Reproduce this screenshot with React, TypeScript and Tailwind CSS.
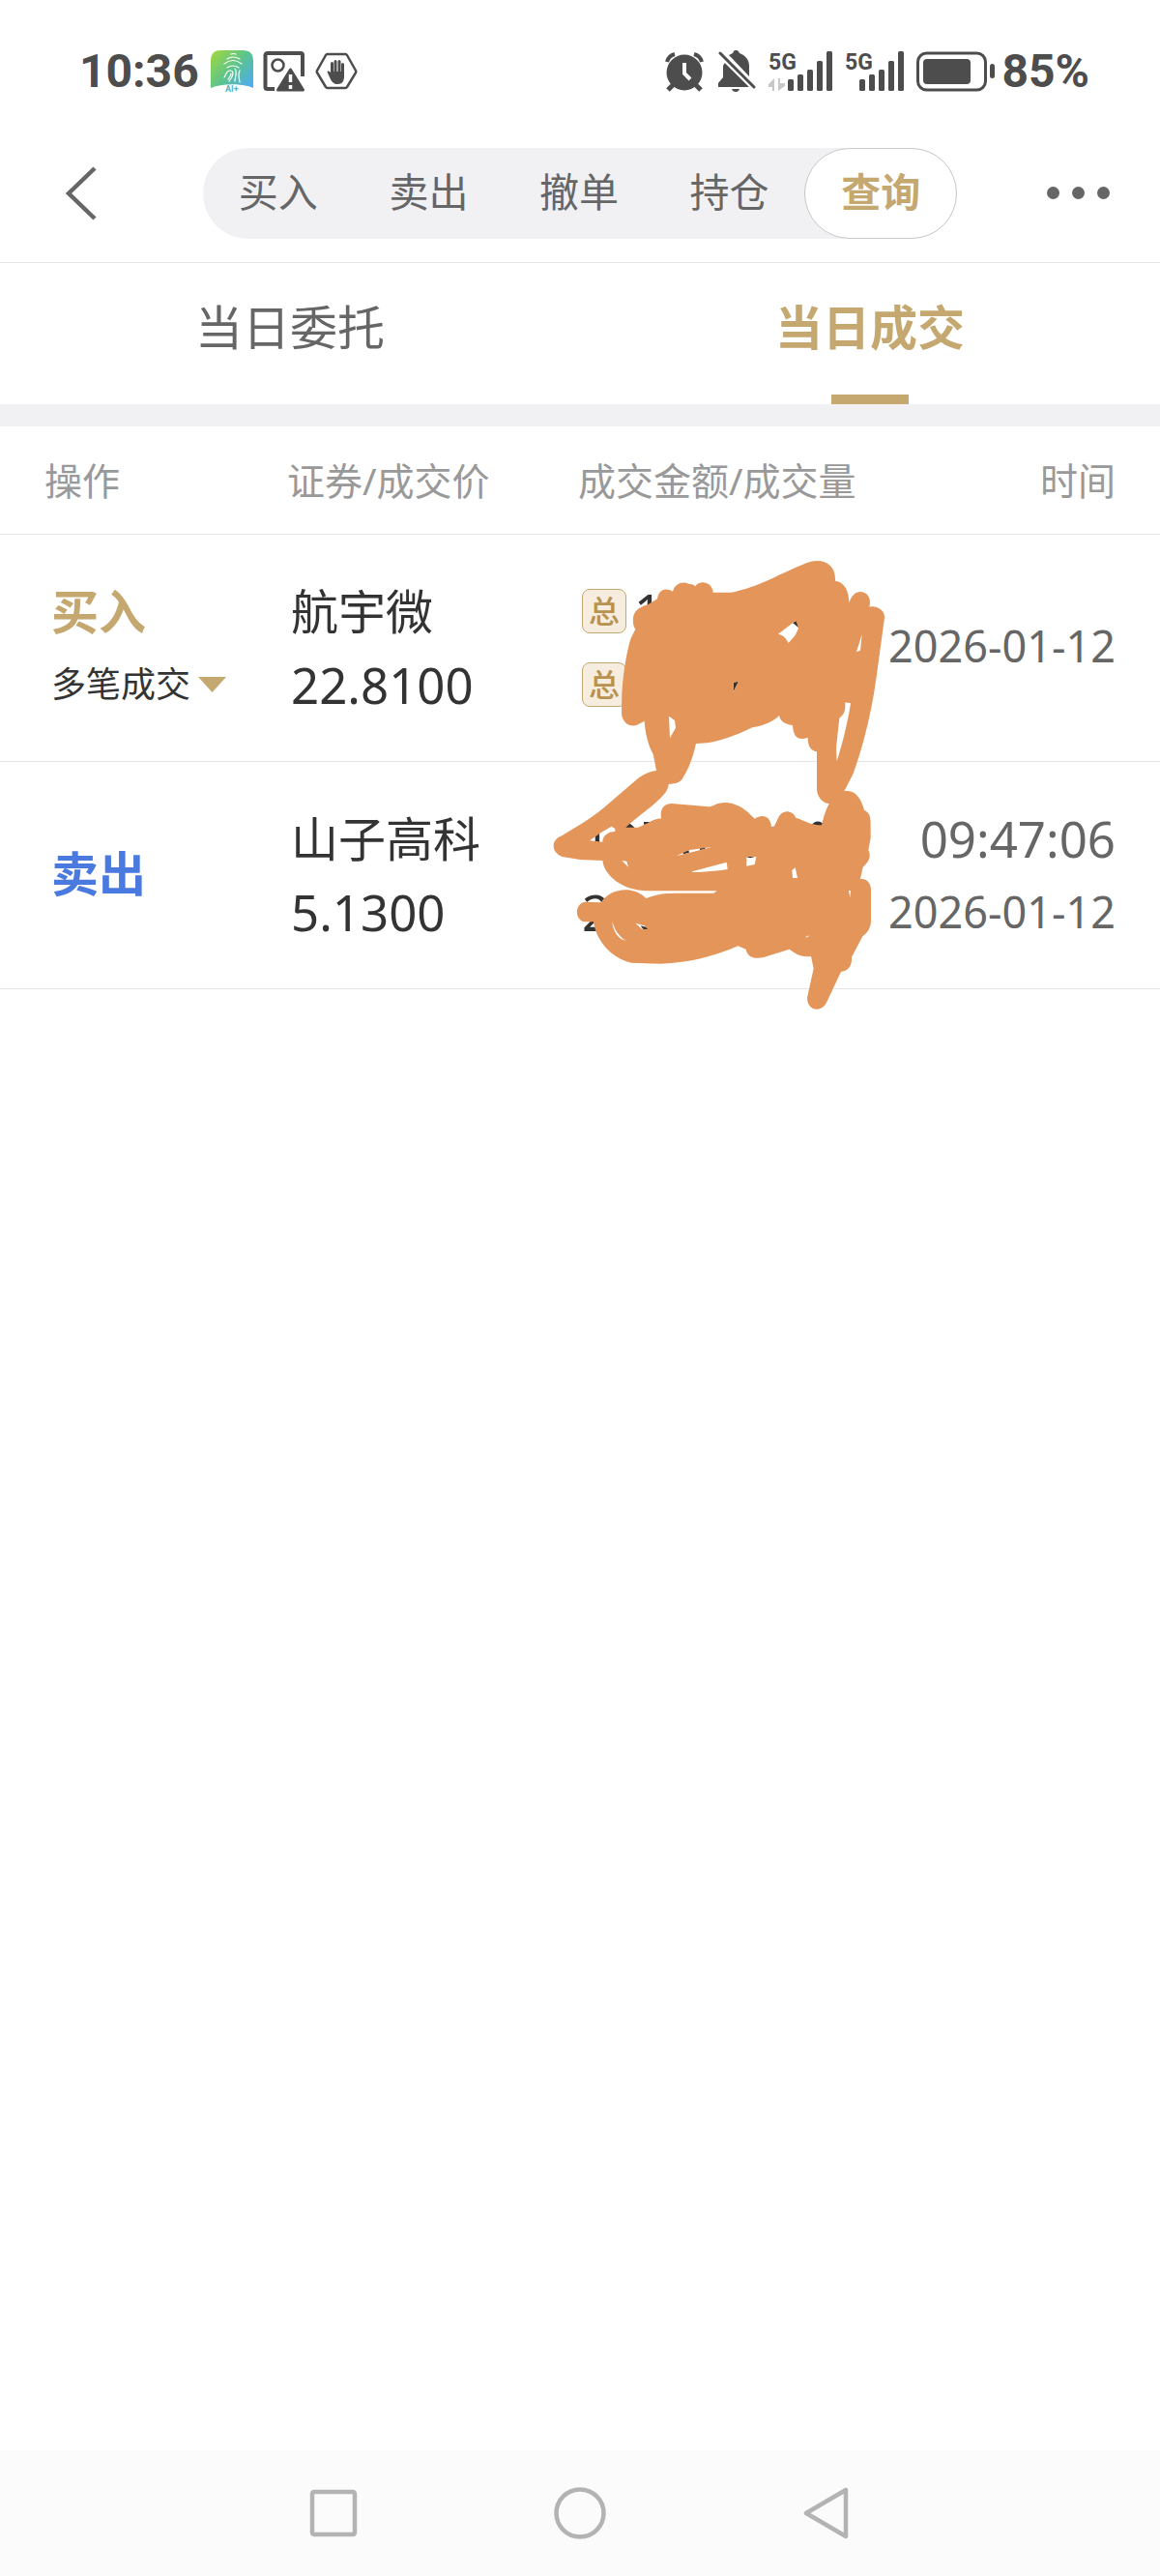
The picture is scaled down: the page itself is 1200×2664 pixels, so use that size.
import React, { useState } from 'react';

interface Trade {
  id: string;
  side: 'buy' | 'sell';
  name: string;
  price: string;
  amount: string;
  volume: string;
  time?: string;
  date: string;
  multiple?: boolean;
}

const NAV_ITEMS = ['买入', '卖出', '撤单', '持仓', '查询'];
const TABS = ['当日委托', '当日成交'];

const TRADES: Trade[] = [
  { id: 't1', side: 'buy', name: '航宇微', price: '22.8100', amount: '1', volume: '', date: '2026-01-12', multiple: true },
  { id: 't2', side: 'sell', name: '山子高科', price: '5.1300', amount: '1', volume: '2', time: '09:47:06', date: '2026-01-12' },
];

const FingerprintIcon = () => (
  <svg width="44" height="44" viewBox="0 0 44 44" fill="none">
    <defs>
      <linearGradient id="fp" x1="0" y1="0" x2="44" y2="40" gradientUnits="userSpaceOnUse">
        <stop offset="0" stopColor="#a3d93a" />
        <stop offset="0.5" stopColor="#5cc48c" />
        <stop offset="1" stopColor="#4aa8ff" />
      </linearGradient>
    </defs>
    <path d="M0 11C0 3 4 0 11 0h22c7 0 11 3 11 11v28C32 34 12 34 0 39Z" fill="url(#fp)" />
    <g stroke="#fff" strokeWidth="1.2" strokeLinecap="round">
      <path d="M21 4q3-1 5 0M17 9q6-4 13 0M14 14q9-7 18 0M17 18q6-4 12 0" />
      <path d="M14 28c2-3 2-7 6-7 5 0 3 6-1 11M18 30c2-3 3-4 3-6M25 19c3 4 0 8 0 13M30 21c-2 4-1 7 0 12" />
    </g>
    <text x="15" y="43" fontSize="9" fontWeight="700" fill="#58b4c4" fontFamily="Roboto, sans-serif">AI+</text>
  </svg>
);

const PictureAlertIcon = () => (
  <svg width="44" height="44" viewBox="0 0 44 44" fill="none" stroke="#4d4d4d">
    <path d="M12 40H4.500a2 2 0 0 1-2-2V5a2 2 0 0 1 2-2H39a2 2 0 0 1 2 2v22" strokeWidth="4" />
    <circle cx="15.500" cy="15.500" r="6" strokeWidth="2.500" />
    <path d="M28.500 20 41.500 41h-26Z" fill="#4d4d4d" strokeWidth="3" strokeLinejoin="round" />
    <path d="M28.500 25v8M28.500 36v4" stroke="#fff" strokeWidth="3.500" />
  </svg>
);

const HandIcon = () => (
  <svg width="44" height="44" viewBox="0 0 44 44" fill="none" stroke="#4d4d4d">
    <path d="M13 4h18a2 2 0 0 1 2 1l9 16a2 2 0 0 1 0 2l-9 15a2 2 0 0 1-2 1H13a2 2 0 0 1-2-1L2 23a2 2 0 0 1 0-2l9-16a2 2 0 0 1 2-1Z" strokeWidth="2.500" />
    <path d="M17.500 24V13.500M21 22V11.500M25 22V11.500M28.500 24V14.500" strokeWidth="3" strokeLinecap="round" />
    <path d="M16 22h14v5c0 5-2 8-6.500 8-4 0-6-2-8-6l-3-6.500c0-1.500 2-1.500 3 0l2 3Z" fill="#4d4d4d" stroke="none" />
  </svg>
);

const AlarmIcon = () => (
  <svg width="42" height="42" viewBox="0 0 42 42" fill="none" stroke="#4d4d4d">
    <circle cx="21" cy="22" r="18.500" fill="#4d4d4d" stroke="none" />
    <path d="m9 35-5 5M33 35l5 5" strokeWidth="5" />
    <path d="M3 11c1-4 4-7 8-8M31 3c4 1 7 4 8 8" strokeWidth="4" />
    <path d="M21 12v11l6 6" stroke="#fff" strokeWidth="4" />
  </svg>
);

const BellOffIcon = () => (
  <svg width="40" height="44" viewBox="0 0 40 44" fill="#4d4d4d">
    <path d="M19 0c2 0 3 1 4 3 6 2 10 7 10 13v11L15 8l-3-3 4-2c1-2 1-3 3-3ZM8 13l25 25H1v-4l5-6V17c0-2 1-3 2-4ZM15 40h8c-1 4-7 4-8 0Z" />
    <path d="m2 3 36 35" stroke="#fff" strokeWidth="6" />
    <path d="m3 3 35 35" stroke="#4d4d4d" strokeWidth="3" strokeLinecap="round" />
  </svg>
);

const Bars = () => (
  <g>
    <rect x="0" y="29" width="6" height="12" rx="1.500" />
    <rect x="10" y="24" width="6" height="17" rx="1.500" />
    <rect x="20" y="19" width="6" height="22" rx="1.500" />
    <rect x="30" y="10" width="6" height="31" rx="1.500" />
    <rect x="40" y="0" width="6" height="41" rx="1.500" />
  </g>
);

const SignalIcon = ({ data }: { data?: boolean }) => (
  <svg width={data ? 66 : 61} height="56" viewBox={data ? '0 -7 66 56' : '0 -7 61 56'} fill="#4d4d4d">
    <text x="0" y="19" fontSize="23" fontWeight="700" fontFamily="Roboto, sans-serif">5G</text>
    {data && <path d="M6 28v13H4v-4H0v-3ZM10 41V28h2v5h5v3Z" fill="#c8c8c8" />}
    <g transform={data ? 'translate(20 0)' : 'translate(15 0)'}><Bars /></g>
  </svg>
);

const BatteryIcon = () => (
  <svg width="82" height="42" viewBox="0 0 82 42" fill="#4d4d4d">
    <rect x="1.500" y="2" width="70" height="38" rx="9" fill="none" stroke="#4d4d4d" strokeWidth="3" />
    <rect x="7" y="8" width="49" height="26" rx="4" />
    <rect x="76" y="13" width="5" height="15" rx="2.500" />
  </svg>
);

const StatusBar = () => (
  <div className="flex h-32 items-center justify-between pt-5 pr-[73px] pl-[82px] font-['Roboto',sans-serif] text-[48px] leading-[48px] font-bold text-[#4d4d4d]">
    <div className="flex items-center gap-3">
      <span>10:36</span>
      <div className="flex gap-[10px]">
        <FingerprintIcon />
        <PictureAlertIcon />
        <HandIcon />
      </div>
    </div>
    <div className="flex items-center gap-[13px]">
      <AlarmIcon />
      <BellOffIcon />
      <SignalIcon data />
      <SignalIcon />
      <div className="flex items-center gap-[6px]">
        <BatteryIcon />
        <span>85%</span>
      </div>
    </div>
  </div>
);

// Hand-drawn mask over the amounts
const Scribble = () => (
  <svg className="pointer-events-none absolute top-[7px] -left-7 z-10" width="380" height="500" viewBox="0 0 1140 1500">
    <g fill="#333">
      <path d="M780 252 792 246 799 268ZM597 437 612 434 595 468ZM228 892C245 866 275 866 290 889ZM318 870H345V878H318ZM838 882C845 864 870 864 880 882Z" />
      <path d="M440 962 458 958V966L440 970ZM492 950 508 948V954L492 957ZM637 976H667Q650 985 637 979ZM308 1192 330 1198V1204L316 1203Z" />
    </g>
    <path
      fill="#e4965a"
      fillRule="evenodd"
      d="M285 240C285 220 300 204 332 195L360 178C363 152 383 140 408 155C415 130 440 122 458 132Q470 131 478 139C492 118 530 125 533 158H590C680 140 750 95 810 72C865 45 915 65 912 122C940 126 955 152 955 190C965 158 988 148 1008 162C1020 172 1022 185 1018 203C1040 198 1067 212 1065 237L1040 420C1025 530 1000 630 968 720L940 775C970 770 990 790 1002 833C1020 842 1022 855 1022 880V920L1015 957C1023 975 1020 990 998 1010L990 1047C1010 1045 1023 1060 1023 1080V1180C1020 1205 1010 1215 997 1225L963 1290C965 1320 950 1332 930 1335L885 1430C870 1462 825 1458 825 1415L845 1325L837 1287C805 1290 790 1280 770 1265L690 1290C660 1296 640 1290 635 1265L610 1255C540 1285 460 1308 370 1310L280 1307C220 1295 170 1240 162 1180H135C103 1175 102 1125 135 1118L185 1120C210 1080 280 1063 325 1107C360 1092 390 1091 430 1091H535L545 1084H330C250 1083 195 1035 190 990L120 987L65 978C30 965 28 925 65 912C110 885 160 855 195 825L300 735C320 720 340 713 357 711L347 660C330 630 322 590 320 557L300 568C275 580 248 560 249 530L250 470C255 400 265 340 278 300L292 272C285 262 284 250 285 240Z
      M480 627L515 625C560 617 610 600 655 577C690 572 725 555 738 540C742 560 760 568 780 570C782 610 800 618 827 608C827 640 840 650 855 652V770C857 795 875 812 893 813C882 835 877 850 870 880C835 880 815 865 790 857C785 845 775 838 760 838C735 842 735 865 722 884H714C710 850 685 845 662 860C645 845 620 812 570 810C545 810 530 823 520 823L405 813C380 813 367 830 372 860C350 858 335 875 300 887H262C300 850 350 820 380 785C390 775 393 765 395 753C420 752 435 745 440 732C460 700 470 670 480 627Z
      M150 928L190 900L218 884L230 892L228 900C205 900 190 915 190 932Z
      M735 287L790 245L798 268C790 295 775 305 767 315C760 300 750 290 735 287Z
      M995 288L978 342L990 338Z
      M943 498C950 503 955 500 960 502C950 570 930 640 917 682L915 640L925 548C935 540 942 530 943 515Z
      M396 542L414 555L417 578L399 610Z
      M597 437L612 434L595 468Z
      M420 975L460 957L530 948L470 963Z
      M468 1024L575 995L578 1017Q530 1025 468 1026Z
      M637 978H667L662 1002L637 1007Z
      M778 1020L788 1012L795 1044H780Z
      M250 990L265 992L270 1010Z
      M220 1178C225 1200 240 1225 262 1238C240 1235 222 1210 220 1178Z
      M292 1184L320 1192L330 1203L312 1202Z
      M954 1083H960L958 1105Z
      M818 1228L832 1222L826 1228Z"
    />
  </svg>
);

const TotalTag = () => (
  <span className="flex size-[46px] items-center justify-center rounded-lg border border-[#c5a870] bg-[#f6eddf] text-[32px] leading-8 font-medium text-[#b8924f]">总</span>
);

const TradeRow: React.FC<{ trade: Trade; masked?: boolean }> = ({ trade, masked }) => (
  <tr className="h-[235px] text-[51px] leading-[76px] text-[#333]">
    <td className={`border-b border-[#e5e5e5] pl-[53px] ${trade.multiple ? '' : 'pb-1'}`}>
      <div className={`text-[49px] font-bold ${trade.side === 'buy' ? 'text-[#c5a870]' : 'text-[#4a7ae0]'}`}>
        {trade.side === 'buy' ? '买入' : '卖出'}
      </div>
      {trade.multiple && (
        <button type="button" className="flex items-center gap-2 text-[36px] leading-[76px]">
          多笔成交
          <svg width="29" height="16" viewBox="0 0 29 16" fill="#c5a870"><path d="M0 0h29L14.500 16Z" /></svg>
        </button>
      )}
    </td>
    <td className="border-b border-[#e5e5e5] pl-[13px]">
      <div className="text-[49px]">{trade.name}</div>
      <div>{trade.price}</div>
    </td>
    <td className="relative border-b border-[#e5e5e5] pl-[14px]">
      <div className="flex h-[76px] items-center gap-2">{trade.multiple && <TotalTag />}{trade.amount}</div>
      <div className="flex h-[76px] items-center gap-2">{trade.multiple && <TotalTag />}{trade.volume}</div>
      {masked && <Scribble />}
    </td>
    <td className={`border-b border-[#e5e5e5] pr-[46px] text-right text-[#666] ${trade.time ? '' : 'pb-1'}`}>
      {trade.time && <div>{trade.time}</div>}
      <div className="text-[45px] whitespace-nowrap">{trade.date}</div>
    </td>
  </tr>
);

const App: React.FC = () => {
  const [activeNav, setActiveNav] = useState('查询');
  const [activeTab, setActiveTab] = useState('当日成交');

  return (
    <div className="flex min-h-screen flex-col bg-white font-['Noto_Sans','Noto_Sans_CJK_SC',sans-serif]">
      <StatusBar />

      <header className="grid h-36 grid-cols-[1fr_65%_1fr] items-center border-b border-[#e5e5e5]">
        <button type="button" aria-label="返回" className="justify-self-start pl-[67px]">
          <svg width="34" height="56" viewBox="0 0 34 56" fill="none" stroke="#666" strokeWidth="4.500"><path d="M31 2 4 28l27 26" /></svg>
        </button>
        <nav className="flex h-[94px] rounded-full bg-[#f1f1f4]">
          {NAV_ITEMS.map(item => (
            <button
              key={item}
              type="button"
              onClick={() => setActiveNav(item)}
              className={`flex-1 rounded-full pb-1 text-[41px] leading-[60px] ${activeNav === item ? 'border border-[#c8c8c8] bg-white font-bold text-[#c5a870]' : 'text-[#666]'}`}
            >
              {item}
            </button>
          ))}
        </nav>
        <button type="button" aria-label="更多" className="flex gap-[13px] justify-self-end pr-[52px]">
          <span className="size-[13px] rounded-full bg-[#666]" />
          <span className="size-[13px] rounded-full bg-[#666]" />
          <span className="size-[13px] rounded-full bg-[#666]" />
        </button>
      </header>

      <div className="grid h-[146px] grid-cols-2">
        {TABS.map(tab => (
          <button
            key={tab}
            type="button"
            onClick={() => setActiveTab(tab)}
            className={`relative pb-[14px] text-[49px] leading-[72px] ${activeTab === tab ? 'font-bold text-[#c5a870]' : 'text-[#666]'}`}
          >
            {tab}
            {activeTab === tab && <span className="absolute inset-x-0 bottom-0 mx-auto h-[10px] w-20 bg-[#c5a870]" />}
          </button>
        ))}
      </div>
      <div className="h-[23px] bg-[#f1f1f4]" />

      <main className="flex-1">
        <table className="w-full table-fixed border-separate border-spacing-0">
          <thead>
            <tr className="h-28 text-left text-[39px] leading-[60px] whitespace-nowrap text-[#999]">
              <th className="w-[24%] border-b border-[#e5e5e5] pl-[46px] font-normal">操作</th>
              <th className="w-[25%] border-b border-[#e5e5e5] pl-[9px] font-normal">证券/成交价</th>
              <th className="w-[27%] border-b border-[#e5e5e5] pl-[10px] font-normal">成交金额/成交量</th>
              <th className="w-[24%] border-b border-[#e5e5e5] pr-[46px] text-right font-normal">时间</th>
            </tr>
          </thead>
          <tbody>
            {TRADES.map((trade, i) => <TradeRow key={trade.id} trade={trade} masked={i === 0} />)}
          </tbody>
        </table>
      </main>

      <footer className="flex h-[130px] items-center justify-center gap-[201px] bg-[#fbfbfb]">
        <button type="button" aria-label="最近任务">
          <svg width="54" height="54" viewBox="0 0 54 54" fill="none" stroke="#b3b3b3" strokeWidth="4.500"><rect x="5" y="5" width="44" height="44" rx="2" /></svg>
        </button>
        <button type="button" aria-label="主页">
          <svg width="54" height="54" viewBox="0 0 54 54" fill="none" stroke="#b3b3b3" strokeWidth="4.500"><circle cx="27" cy="27" r="24.500" /></svg>
        </button>
        <button type="button" aria-label="返回上一页">
          <svg width="54" height="54" viewBox="0 0 54 54" fill="none" stroke="#b3b3b3" strokeWidth="4.500" strokeLinejoin="round"><path d="M47 3v48L6 27Z" /></svg>
        </button>
      </footer>
    </div>
  );
};

export default App;
